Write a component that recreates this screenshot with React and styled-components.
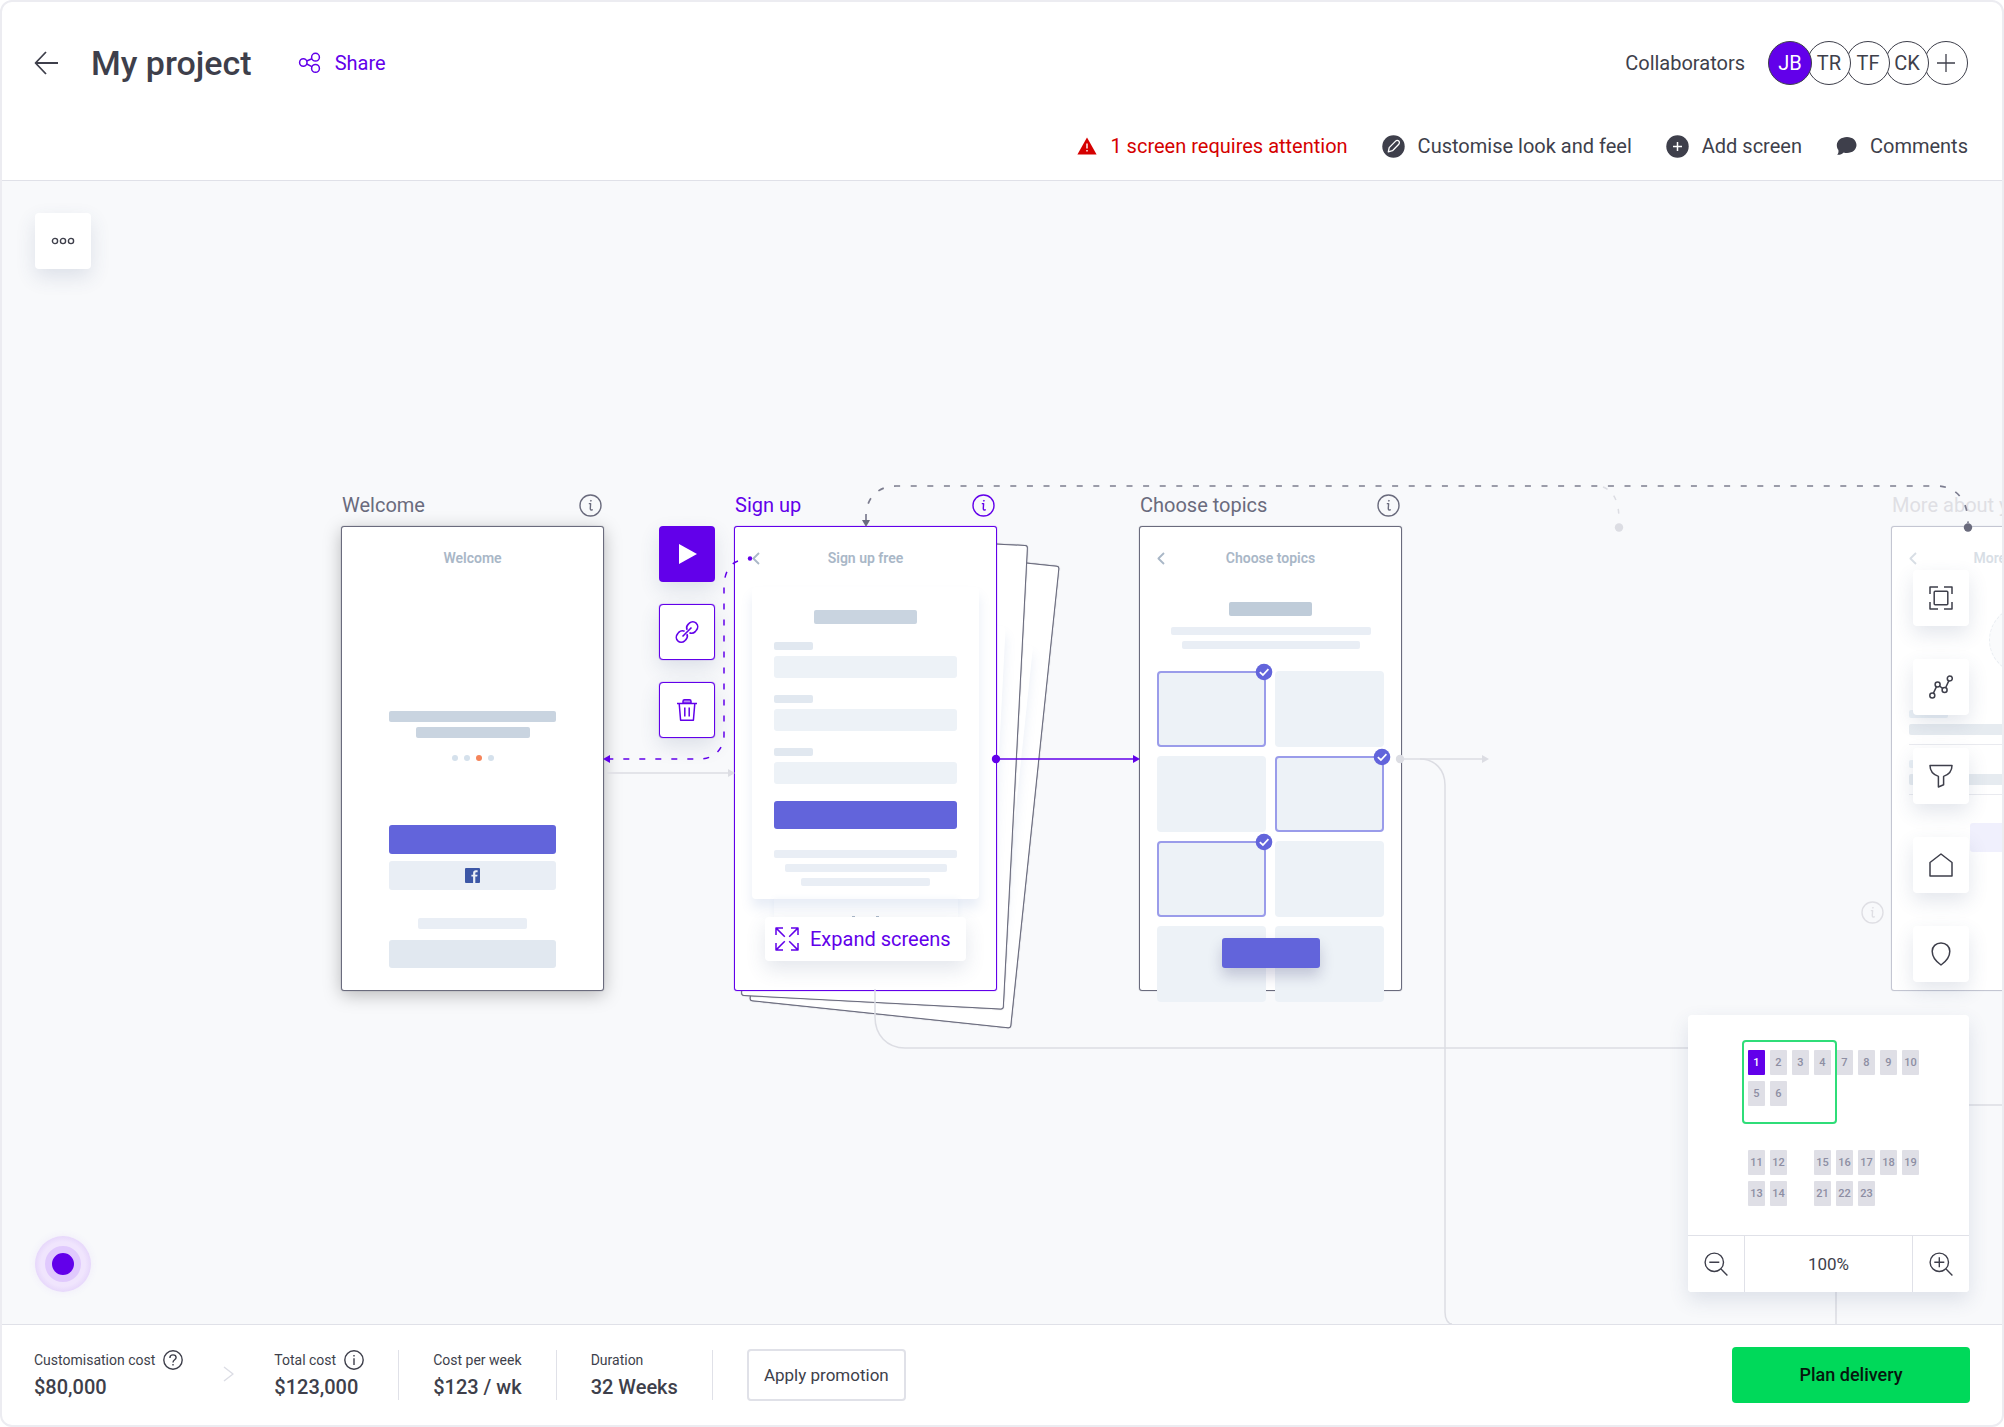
import React from "react";
import styled, { createGlobalStyle, css } from "styled-components";

const c = {
  ink: "#3e3f4b",
  muted: "#6a6b7d",
  purple: "#6200ea",
  indigo: "#6264db",
  red: "#d50000",
  green: "#00d95a",
  line: "#e0e1e8",
  edge: "#ececf1",
  canvas: "#f8f9fb",
  slate: "#a9b7c7",
};

const GlobalStyle = createGlobalStyle`
  * { box-sizing: border-box; }
  body { margin: 0; background: #fff; }
  button { font: inherit; color: inherit; cursor: pointer; }
  h1, h2, h3, p, dl, dt, dd { margin: 0; font-size: inherit; font-weight: inherit; }
  svg { display: block; flex: none; }
`;

const Shell = styled.div`
  display: flex;
  flex-direction: column;
  min-height: 100vh;
  border: 2px solid ${c.edge};
  border-radius: 12px;
  overflow: hidden;
  background: #fff;
  color: ${c.ink};
  font-family: Roboto, "Liberation Sans", sans-serif;
  font-size: 20px;
  line-height: 24px;
`;

/* ---------- header ---------- */

const Header = styled.header`
  display: flex;
  flex-direction: column;
  gap: 49px;
  padding: 39px 34px 22px 32px;
  border-bottom: 1px solid ${c.line};
`;

const HeaderRow = styled.div`
  display: flex;
  align-items: center;
  justify-content: ${(p) => (p.$end ? "flex-end" : "space-between")};
  gap: 34px;
`;

const Group = styled.div`
  display: flex;
  align-items: center;
`;

const PlainButton = styled.button`
  display: inline-flex;
  align-items: center;
  gap: 13px;
  padding: 0;
  border: 0;
  background: none;
  color: ${(p) => p.$color || c.ink};
`;

const Title = styled.h1`
  margin: 0 46px 0 33px;
  font-size: 34px;
  line-height: 40px;
  font-weight: 500;
`;

const Avatars = styled.ul`
  display: flex;
  margin: 0 0 0 23px;
  padding: 0;
  list-style: none;
  isolation: isolate;
`;

const AvatarItem = styled.li`
  position: relative;
  z-index: ${(p) => p.$z};
  & + & { margin-left: -5px; }
`;

const Avatar = styled.button`
  display: flex;
  align-items: center;
  justify-content: center;
  width: 44px;
  height: 44px;
  padding: 0;
  border: 1px solid ${c.ink};
  border-radius: 50%;
  background: ${(p) => (p.$active ? c.purple : "#fff")};
  color: ${(p) => (p.$active ? "#fff" : c.ink)};
`;

/* ---------- canvas ---------- */

const Canvas = styled.main`
  position: relative;
  flex: 1;
  min-height: 1142px;
  overflow: hidden;
  background: ${c.canvas};
`;

const Connectors = styled.svg`
  position: absolute;
  top: 1px;
  left: 0;
  width: 100%;
  height: 100%;
  pointer-events: none;
`;

const softShadow = css`
  box-shadow: 0 8px 20px rgba(60, 80, 120, 0.14);
`;

const Tile = styled.button`
  display: flex;
  align-items: center;
  justify-content: center;
  width: 56px;
  height: 56px;
  padding: 0;
  border: ${(p) => (p.$outlined ? `1px solid ${c.purple}` : "0")};
  border-radius: 4px;
  background: ${(p) => (p.$filled ? c.purple : "#fff")};
  color: ${(p) => (p.$filled ? "#fff" : p.$outlined ? c.purple : c.ink)};
  box-shadow: 0 8px 20px rgba(60, 80, 120, 0.14)${(p) => (p.$outlined ? `, 0 0 1px ${c.purple}` : "")};
`;

const Floating = styled.div`
  position: absolute;
  display: flex;
  flex-direction: column;
  gap: ${(p) => p.$gap || 0}px;
  left: ${(p) => (p.$left === undefined ? "auto" : `${p.$left}px`)};
  right: ${(p) => (p.$right === undefined ? "auto" : `${p.$right}px`)};
  top: ${(p) => (p.$top === undefined ? "auto" : `${p.$top}px`)};
  bottom: ${(p) => (p.$bottom === undefined ? "auto" : `${p.$bottom}px`)};
`;

const Node = styled.section`
  position: absolute;
  left: ${(p) => p.$left}px;
  top: 312px;
  width: 263px;
`;

const NodeLabel = styled.div`
  display: flex;
  align-items: center;
  justify-content: space-between;
  height: 24px;
  margin-bottom: 9px;
  padding: 0 ${(p) => p.$inset || 1}px 0 1px;
  white-space: nowrap;
  color: ${(p) => p.$color || c.muted};
`;

const InfoButton = styled.button`
  padding: 0;
  border: 0;
  background: none;
`;

const Screen = styled.div`
  position: relative;
  display: flex;
  flex-direction: column;
  align-items: center;
  height: 465px;
  padding-top: 23px;
  border: 1px solid ${(p) => p.$border || c.muted};
  border-radius: 3px;
  background: #fff;
  box-shadow: 0 0 1px ${(p) => p.$border || c.muted}${(p) => (p.$lifted ? ", 0 4px 18px rgba(0, 0, 0, 0.26)" : "")};
  & > * { flex: none; }
`;

const BackSheet = styled.div`
  position: absolute;
  left: ${(p) => p.$left}px;
  top: ${(p) => p.$top}px;
  display: flex;
  justify-content: center;
  width: 263px;
  height: 465px;
  padding-top: 60px;
  border: 1px solid ${c.muted};
  border-radius: 3px;
  background: #fff;
  box-shadow: 0 0 1px ${c.muted};
  transform: rotate(${(p) => p.$tilt}deg);
`;

const ScreenBar = styled.div`
  display: grid;
  grid-template-columns: 1fr auto 1fr;
  align-items: center;
  width: 100%;
  padding: 0 17px;
  font-size: 14px;
  line-height: 16px;
  font-weight: 600;
  white-space: nowrap;
  color: ${c.slate};
`;

const Bar = styled.div`
  flex: none;
  width: ${(p) => p.$w}px;
  height: ${(p) => p.$h}px;
  margin-top: ${(p) => p.$mt || 0}px;
  border-radius: ${(p) => (p.$h > 16 ? 3 : 2)}px;
  background: ${(p) => p.$bg || "#e9eef5"};
  display: flex;
  align-items: center;
  justify-content: center;
`;

const Dots = styled.div`
  display: flex;
  gap: 6px;
  margin-top: 17px;
`;

const Dot = styled.span`
  width: 6px;
  height: 6px;
  border-radius: 50%;
  background: ${(p) => (p.$on ? "#f5845a" : "#d5e1ec")};
`;

const FormPanel = styled.div`
  display: flex;
  flex-direction: column;
  align-items: ${(p) => (p.$blank ? "stretch" : "center")};
  width: 227px;
  height: 312px;
  margin-top: 21px;
  padding-top: 23px;
  border-radius: 4px;
  background: #fff;
  box-shadow: 0 9px 12px rgba(90, 130, 190, 0.14);
`;

const Fields = styled.div`
  display: flex;
  flex-direction: column;
  gap: 17px;
  margin-top: 18px;
`;

const Peek = styled.div`
  display: flex;
  align-items: flex-end;
  justify-content: center;
  gap: 21px;
  width: 184px;
  height: 18px;
  box-shadow: 0 0 6px rgba(90, 130, 190, 0.08);
`;

const Tick = styled.span`
  width: 3px;
  height: 1px;
  background: ${c.slate};
`;

const ExpandButton = styled.button`
  position: relative;
  display: flex;
  align-items: center;
  gap: 11px;
  height: 44px;
  width: 201px;
  padding: 0 0 0 10px;
  border: 0;
  border-radius: 4px;
  background: #fff;
  color: ${c.purple};
  white-space: nowrap;
  ${softShadow}
`;

const Topics = styled.div`
  display: grid;
  grid-template-columns: repeat(2, 109px);
  grid-auto-rows: 76px;
  gap: 9px;
  margin-top: 22px;
`;

const Topic = styled.div`
  position: relative;
  border: ${(p) => (p.$on ? "2px solid #9a9cea" : "0")};
  border-radius: 4px;
  background: #edf2f7;
`;

const Check = styled.span`
  position: absolute;
  top: -10px;
  right: -9px;
`;

const Cta = styled.div`
  position: absolute;
  bottom: 22px;
  left: 50%;
  width: 98px;
  height: 30px;
  margin-left: -49px;
  border-radius: 3px;
  background: ${c.indigo};
  box-shadow: 0 8px 14px rgba(40, 40, 100, 0.22);
`;

const Faded = styled.div`
  display: flex;
  flex-direction: column;
  align-items: center;
  width: 100%;
  opacity: 0.45;
`;

const Portrait = styled.div`
  width: 68px;
  height: 68px;
  margin-top: 40px;
  border: 1px dashed #cfd8e2;
  border-radius: 50%;
  background: #f4f7fa;
`;

const FieldStack = styled.div`
  display: flex;
  flex-direction: column;
  width: 227px;
  margin-top: ${(p) => p.$mt}px;
  padding-bottom: 9px;
  border-bottom: 1px solid #cfd2dc;
`;

const Pulse = styled.button`
  display: flex;
  align-items: center;
  justify-content: center;
  width: 56px;
  height: 56px;
  padding: 0;
  border: 0;
  border-radius: 50%;
  background: radial-gradient(circle, #f0e5fd 56%, #e7d8fb 70%);
  box-shadow: 0 0 10px rgba(98, 0, 234, 0.06);
`;

const PulseCore = styled.span`
  width: 36px;
  height: 36px;
  border: 7px solid #e0c9fd;
  border-radius: 50%;
  background: ${c.purple};
`;

/* ---------- minimap ---------- */

const MiniMap = styled.aside`
  width: 281px;
  border-radius: 4px;
  background: #fff;
  overflow: hidden;
`;

const MiniFrame = styled.div`
  border-radius: 4px;
  ${softShadow}
`;

const MiniBody = styled.div`
  position: relative;
  display: flex;
  flex-direction: column;
  gap: 44px;
  height: 220px;
  padding: 35px 0 0 60px;
`;

const MiniGrid = styled.div`
  display: grid;
  grid-template-columns: repeat(8, 17px);
  grid-auto-rows: 25px;
  gap: 6px 5px;
`;

const MiniCell = styled.button`
  grid-column: ${(p) => p.$col};
  grid-row: ${(p) => p.$row};
  padding: 0;
  border: 0;
  border-radius: 1px;
  background: ${(p) => (p.$on ? c.purple : "#dfdfe6")};
  color: ${(p) => (p.$on ? "#fff" : "#8d8ea3")};
  font-size: 11px;
  line-height: 25px;
  font-weight: 500;
  text-align: center;
`;

const Viewport = styled.div`
  position: absolute;
  left: 54px;
  top: 25px;
  width: 95px;
  height: 84px;
  border: 2px solid #2fdd78;
  border-radius: 4px;
`;

const ZoomBar = styled.div`
  display: grid;
  grid-template-columns: 56px 1fr 56px;
  height: 57px;
  border-top: 1px solid ${c.line};
`;

const ZoomButton = styled.button`
  display: flex;
  align-items: center;
  justify-content: center;
  padding: 0;
  border: 0;
  background: #fff;
`;

const ZoomValue = styled.output`
  display: flex;
  align-items: center;
  justify-content: center;
  border: solid ${c.line};
  border-width: 0 1px;
  font-size: 17px;
`;

/* ---------- footer ---------- */

const Footer = styled.footer`
  display: flex;
  align-items: center;
  height: 101px;
  padding: 0 32px;
  border-top: 1px solid ${c.line};
`;

const Stats = styled.dl`
  display: flex;
  align-items: center;
`;

const Stat = styled.div`
  display: flex;
  flex-direction: column;
  gap: 5px;
  height: 50px;
  padding-right: ${(p) => (p.$divided ? 34 : 40)}px;
  margin-right: ${(p) => (p.$divided ? 34 : 0)}px;
  border-right: ${(p) => (p.$divided ? `1px solid ${c.line}` : "0")};
`;

const StatName = styled.dt`
  display: flex;
  align-items: center;
  gap: 8px;
  height: 20px;
  font-size: 14px;
  white-space: nowrap;
`;

const StatValue = styled.dd`
  font-size: 20px;
  font-weight: 500;
  white-space: nowrap;
`;

const StepMark = styled.div`
  margin-right: 40px;
`;

const Promo = styled.button`
  height: 52px;
  width: 159px;
  padding: 0;
  border: 2px solid ${c.line};
  border-radius: 4px;
  background: #fff;
  font-size: 17px;
`;

const Plan = styled.button`
  width: 238px;
  height: 56px;
  margin-left: auto;
  padding: 0;
  border: 0;
  border-radius: 4px;
  background: ${c.green};
  color: #06170d;
  font-size: 18px;
  font-weight: 500;
`;

/* ---------- icons ---------- */

const Line = ({ size = 24, w = size, h = size, sw = 1.3, children }) => (
  <svg
    width={w}
    height={h}
    viewBox={`0 0 ${w} ${h}`}
    fill="none"
    stroke="currentColor"
    strokeWidth={sw}
    strokeLinejoin="round"
    aria-hidden="true"
  >
    {children}
  </svg>
);

const ArrowLeft = () => (
  <Line sw={1.8}>
    <path d="M24 12H1.5M12 1L1.5 12L12 23" />
  </Line>
);

const ShareIcon = () => (
  <Line sw={1.5}>
    <circle cx="5.3" cy="11.5" r="3.7" />
    <circle cx="17.5" cy="6.2" r="3.9" />
    <circle cx="17.5" cy="17.4" r="3.9" />
    <path d="M8.7 10L13.9 7.7M8.7 13L13.9 15.7" />
  </Line>
);

const PlusIcon = () => (
  <Line size={20} sw={1.3}>
    <path d="M10 1V19M1 10H19" />
  </Line>
);

const AlertIcon = () => (
  <svg width="20" height="18" viewBox="0 0 20 18" aria-hidden="true">
    <path d="M10 0.5L19.6 17.5H0.4Z" fill="currentColor" />
    <path d="M10 6.5V11.5M10 13V14.4" stroke="#fff" strokeWidth="1.4" />
  </svg>
);

const PencilDisc = () => (
  <svg width="23" height="23" viewBox="0 0 23 23" aria-hidden="true">
    <circle cx="11.5" cy="11.5" r="11.2" fill="currentColor" />
    <path
      d="M6.3 16.8L7.2 12.6L13.6 6.1A2.1 2.1 0 0 1 16.8 9.2L10.5 15.7Z"
      fill="none"
      stroke="#fff"
      strokeWidth="1.3"
      strokeLinejoin="round"
    />
  </svg>
);

const PlusDisc = () => (
  <svg width="23" height="23" viewBox="0 0 23 23" aria-hidden="true">
    <circle cx="11.5" cy="11.5" r="11.2" fill="currentColor" />
    <path d="M11.5 7V16M7 11.5H16" stroke="#fff" strokeWidth="1.5" />
  </svg>
);

const BubbleIcon = () => (
  <svg width="21" height="20" viewBox="0 0 21 20" aria-hidden="true">
    <path
      d="M11 1C16.6 1 20.5 4.6 20.5 9C20.5 13.4 16.6 17 11 17C9.8 17 8.7 16.9 7.7 16.5C6 18.2 4 19 1.2 18.8C2.4 17.6 2.7 16 2.4 14C1.3 12.6 0.8 10.9 0.8 9C0.8 4.6 5.4 1 11 1Z"
      fill="currentColor"
    />
  </svg>
);

const MoreIcon = () => (
  <Line w={24} h={8} sw={1.4}>
    <circle cx="4" cy="4" r="2.6" />
    <circle cx="12" cy="4" r="2.6" />
    <circle cx="20" cy="4" r="2.6" />
  </Line>
);

const ItalicInfo = () => (
  <Line size={23} sw={1.4}>
    <circle cx="11.5" cy="11.5" r="10.5" />
    <path d="M9.8 9.6H11.6L11.3 14.2C11.2 15.8 12 16.4 13.8 15.7" />
    <circle cx="11.9" cy="6.8" r="0.5" fill="currentColor" strokeWidth="0.8" />
  </Line>
);

const PlayIcon = () => (
  <svg width="20" height="22" viewBox="0 0 20 22" aria-hidden="true">
    <path d="M2 1L20 11L2 21Z" fill="currentColor" />
  </svg>
);

const LinkIcon = () => (
  <Line sw={1.6}>
    <path d="M9.6 11.2C7.6 10.4 5.3 10.8 3.7 12.4L2.6 13.9C0.8 15.9 0.9 18.9 2.8 20.8C4.7 22.6 7.7 22.6 9.7 20.8L10.9 19.6C12.5 18 12.7 15.9 11.9 14.2" />
    <path d="M14.4 12.8C16.4 13.6 18.7 13.2 20.3 11.6L21.4 10.1C23.2 8.1 23.1 5.1 21.2 3.2C19.3 1.4 16.3 1.4 14.3 3.2L13.1 4.4C11.5 6 11.3 8.1 12.1 9.8" />
    <path d="M7.5 16.5L16.5 7.5" />
  </Line>
);

const TrashIcon = () => (
  <Line sw={1.5}>
    <path d="M8 5.2V3.2C8 2.3 8.6 1.7 9.5 1.7H14.5C15.4 1.7 16 2.3 16 3.2V5.2Z" fill="#b48af4" />
    <path d="M2 5.5H22M4.2 5.5L5.6 22.3H18.4L19.8 5.5M9.8 9.5V18.5M14.2 9.5V18.5" />
  </Line>
);

const ExpandIcon = () => (
  <Line sw={1.5}>
    <path d="M1 8V1H8M1.4 1.4L9.8 9.8M16 1H23V8M22.6 1.4L14.2 9.8M1 16V23H8M1.4 22.6L9.8 14.2M23 16V23H16M22.6 22.6L14.2 14.2" />
  </Line>
);

const Chevron = () => (
  <Line w={8} h={13} sw={1.8}>
    <path d="M7 1L1.4 6.5L7 12" />
  </Line>
);

const FacebookIcon = () => (
  <svg width="15" height="15" viewBox="0 0 15 15" aria-hidden="true">
    <rect width="15" height="15" rx="1" fill="#3c57a6" />
    <path
      d="M12.6 4.2H11.4C10.6 4.2 10.3 4.6 10.3 5.4V6.7H12.6L12.2 8.6H10.3V15H8.1V8.6H6.4V6.7H8.1V5C8.1 3.2 9.2 2.3 10.9 2.3H12.6Z"
      fill="#e9eef5"
    />
  </svg>
);

const CheckBadge = () => (
  <svg width="18" height="18" viewBox="0 0 18 18" aria-hidden="true">
    <circle cx="9" cy="9" r="8.3" fill={c.indigo} />
    <path d="M4.8 9.2L7.9 12L13.4 6.2" fill="none" stroke="#fff" strokeWidth="1.7" />
  </svg>
);

const FrameIcon = () => (
  <Line sw={1.5}>
    <path d="M1 8V1H9M15 1H23V8M23 16V23H15M9 23H1V16" />
    <rect x="5.2" y="5.2" width="13.6" height="13.6" rx="1" />
  </Line>
);

const GraphIcon = () => (
  <Line sw={1.5}>
    <circle cx="3.3" cy="20.4" r="2.5" />
    <circle cx="8.6" cy="9.4" r="2.5" />
    <circle cx="15.6" cy="15" r="2.5" />
    <circle cx="20.8" cy="3.6" r="2.5" />
    <path d="M4.4 18.1L7.5 11.7M10.5 11L13.6 13.4M16.6 12.7L19.8 5.9" />
  </Line>
);

const FunnelIcon = () => (
  <Line sw={1.5}>
    <path d="M1 1.5H23C23 7 20 10.5 14.6 12.4V20.8L9.4 23V12.4C4 10.5 1 7 1 1.5Z" />
  </Line>
);

const HomeIcon = () => (
  <Line sw={1.5}>
    <path d="M1 9.5L12 1L23 9.5V23H1Z" />
  </Line>
);

const PinIcon = () => (
  <Line sw={1.5}>
    <path d="M12 1C17.2 1 20.8 4.6 20.8 9.3C20.8 14.5 17.5 19.2 12 23C6.5 19.2 3.2 14.5 3.2 9.3C3.2 4.6 6.8 1 12 1Z" />
  </Line>
);

const Magnifier = ({ plus }) => (
  <Line sw={1.4}>
    <circle cx="10.3" cy="10.3" r="9.2" />
    <path d={`M17 17L23.4 23.4M5.3 10.3H15.3${plus ? "M10.3 5.3V15.3" : ""}`} />
  </Line>
);

const HelpIcon = () => (
  <Line size={20} sw={1.4}>
    <circle cx="10" cy="10" r="9.2" />
    <path d="M6.9 7.9C6.9 5.9 8.2 4.9 10 4.9S13.1 6 13.1 7.6C13.1 9.8 10 9.8 10 12.4M10 14V15.4" />
  </Line>
);

const InfoIcon = () => (
  <Line size={20} sw={1.4}>
    <circle cx="10" cy="10" r="9.2" />
    <path d="M10 8.2V15M10 5V6.4" />
  </Line>
);

const NextIcon = () => (
  <Line w={11} h={16} sw={1.4}>
    <path d="M1 1L10 8L1 15" />
  </Line>
);

/* ---------- data ---------- */

const collaborators = ["JB", "TR", "TF", "CK"];

const miniTop = [
  [1, 1, 1], [2, 2, 1], [3, 3, 1], [4, 4, 1], [7, 5, 1], [8, 6, 1], [9, 7, 1], [10, 8, 1],
  [5, 1, 2], [6, 2, 2],
];

const miniBottom = [
  [11, 1, 1], [12, 2, 1], [15, 4, 1], [16, 5, 1], [17, 6, 1], [18, 7, 1], [19, 8, 1],
  [13, 1, 2], [14, 2, 2], [21, 4, 2], [22, 5, 2], [23, 6, 2],
];

const tools = [
  ["Fit to screen", FrameIcon],
  ["Flow", GraphIcon],
  ["Filter", FunnelIcon],
  ["Home", HomeIcon],
  ["Pin", PinIcon],
];

const topicsOn = [true, false, false, true, true, false, false, false];

/* ---------- parts ---------- */

const ScreenTitle = ({ children, back }) => (
  <ScreenBar>
    {back ? <Chevron /> : <span />}
    <h3>{children}</h3>
    <span />
  </ScreenBar>
);

const NodeHead = ({ name, ...rest }) => (
  <NodeLabel {...rest}>
    <h2>{name}</h2>
    <InfoButton aria-label={`About ${name}`}>
      <ItalicInfo />
    </InfoButton>
  </NodeLabel>
);

const ConnectorLines = () => (
  <Connectors fill="none" strokeWidth="1.5" aria-hidden="true">
    <g stroke="#dcdde3">
      <path d="M605 591H728" />
      <path d="M1402 577H1482" />
      <path d="M1418 577C1433 577 1443 588 1443 603V1130C1443 1137 1446 1142 1450 1142" />
      <path d="M873 807V835C873 853 885 866 903 866H1700" />
      <path d="M1960 923H2000M1834 1100V1142" />
      <path d="M1601 305C1612 309 1617 320 1617 338" strokeDasharray="5 9" />
    </g>
    <g fill="#dcdde3">
      <path d="M726 587L733 591L726 595Z" />
      <path d="M1480 573L1487 577L1480 581Z" />
      <circle cx="1398" cy="577" r="4.2" />
      <circle cx="1617" cy="345.5" r="4.2" />
    </g>
    <path
      d="M864 338V334C864 316 876 304 894 304H1934C1954 304 1966 318 1966 341"
      stroke="#7c7d8f"
      strokeWidth="1.7"
      strokeDasharray="6 10.6"
    />
    <g fill={c.muted}>
      <path d="M860 338H868L864 345Z" />
      <circle cx="1966" cy="345.5" r="4.2" />
    </g>
    <g stroke={c.purple}>
      <path d="M994 577H1133" />
      <path
        d="M736 379C727 382 722 392 722 405V553C722 567 712 577 698 577H607"
        strokeDasharray="6 10"
      />
    </g>
    <g fill={c.purple}>
      <circle cx="748" cy="376.5" r="2.2" />
      <circle cx="994" cy="577" r="4.2" />
      <path d="M1131 573L1138 577L1131 581Z" />
      <path d="M608 573L601 577L608 581Z" />
    </g>
  </Connectors>
);

const MiniCells = ({ cells }) => (
  <MiniGrid>
    {cells.map(([n, col, row]) => (
      <MiniCell key={n} $col={col} $row={row} $on={n === 1}>
        {n}
      </MiniCell>
    ))}
  </MiniGrid>
);

/* ---------- page ---------- */

export default function App() {
  return (
    <>
      <GlobalStyle />
      <Shell>
        <Header>
          <HeaderRow>
            <Group>
              <PlainButton aria-label="Back">
                <ArrowLeft />
              </PlainButton>
              <Title>My project</Title>
              <PlainButton $color={c.purple}>
                <ShareIcon />
                Share
              </PlainButton>
            </Group>
            <Group>
              Collaborators
              <Avatars>
                {collaborators.map((name, i) => (
                  <AvatarItem key={name} $z={9 - i}>
                    <Avatar $active={i === 0}>{name}</Avatar>
                  </AvatarItem>
                ))}
                <AvatarItem $z={1}>
                  <Avatar aria-label="Add collaborator">
                    <PlusIcon />
                  </Avatar>
                </AvatarItem>
              </Avatars>
            </Group>
          </HeaderRow>
          <HeaderRow $end>
            <PlainButton $color={c.red}>
              <AlertIcon />1 screen requires attention
            </PlainButton>
            <PlainButton>
              <PencilDisc />
              Customise look and feel
            </PlainButton>
            <PlainButton>
              <PlusDisc />
              Add screen
            </PlainButton>
            <PlainButton>
              <BubbleIcon />
              Comments
            </PlainButton>
          </HeaderRow>
        </Header>

        <Canvas>
          <Node $left={339}>
            <NodeHead name="Welcome" $inset={2} />
            <Screen $lifted>
              <ScreenTitle>Welcome</ScreenTitle>
              <Bar $w={167} $h={11} $mt={145} $bg="#c9d4e0" />
              <Bar $w={114} $h={11} $mt={5} $bg="#c9d4e0" />
              <Dots>
                <Dot />
                <Dot />
                <Dot $on />
                <Dot />
              </Dots>
              <Bar $w={167} $h={29} $mt={64} $bg={c.indigo} />
              <Bar $w={167} $h={29} $mt={7}>
                <FacebookIcon />
              </Bar>
              <Bar $w={109} $h={11} $mt={28} />
              <Bar $w={167} $h={28} $mt={11} $bg="#e1e8f0" />
            </Screen>
          </Node>

          <Floating $left={657} $top={345} $gap={22}>
            <Tile $filled aria-label="Play">
              <PlayIcon />
            </Tile>
            <Tile $outlined aria-label="Link">
              <LinkIcon />
            </Tile>
            <Tile $outlined aria-label="Delete">
              <TrashIcon />
            </Tile>
          </Floating>

          <BackSheet $left={771} $top={370} $tilt={6}>
            <FormPanel $blank />
          </BackSheet>
          <BackSheet $left={751} $top={357} $tilt={3}>
            <FormPanel $blank />
          </BackSheet>
          <Node $left={732}>
            <NodeHead name="Sign up" $color={c.purple} $inset={2} />
            <Screen $border={c.purple}>
              <ScreenTitle back>Sign up free</ScreenTitle>
              <FormPanel>
                <Bar $w={103} $h={14} $bg="#c9d4e0" />
                <Fields>
                  {[0, 1, 2].map((i) => (
                    <div key={i}>
                      <Bar $w={39} $h={8} $bg="#e1e8f0" />
                      <Bar $w={183} $h={22} $mt={6} $bg="#edf2f7" />
                    </div>
                  ))}
                </Fields>
                <Bar $w={183} $h={28} $mt={17} $bg={c.indigo} />
                <Bar $w={183} $h={8} $mt={21} />
                <Bar $w={162} $h={8} $mt={6} />
                <Bar $w={129} $h={8} $mt={6} />
              </FormPanel>
              <Peek>
                <Tick />
                <Tick />
              </Peek>
              <ExpandButton>
                <ExpandIcon />
                Expand screens
              </ExpandButton>
            </Screen>
          </Node>

          <Node $left={1137}>
            <NodeHead name="Choose topics" $inset={2} />
            <Screen>
              <ScreenTitle back>Choose topics</ScreenTitle>
              <Bar $w={83} $h={14} $mt={36} $bg="#bfccd9" />
              <Bar $w={200} $h={8} $mt={11} />
              <Bar $w={178} $h={8} $mt={6} />
              <Topics>
                {topicsOn.map((on, i) => (
                  <Topic key={i} $on={on}>
                    {on && (
                      <Check>
                        <CheckBadge />
                      </Check>
                    )}
                  </Topic>
                ))}
              </Topics>
              <Cta />
            </Screen>
          </Node>

          <Node $left={1889}>
            <NodeHead name="More about you" $color="#dfdfe4" />
            <Screen $border="#c4c6d2">
              <Faded>
                <ScreenTitle back>More about you</ScreenTitle>
                <Portrait />
                <FieldStack $mt={36}>
                  <Bar $w={39} $h={8} $bg="#d5e1ec" />
                  <Bar $w={227} $h={11} $mt={6} $bg="#c9d4e0" />
                </FieldStack>
                <FieldStack $mt={15}>
                  <Bar $w={39} $h={8} $bg="#d5e1ec" />
                  <Bar $w={227} $h={11} $mt={6} $bg="#c9d4e0" />
                </FieldStack>
                <Bar $w={106} $h={29} $mt={28} $bg="#e0e0fb" />
              </Faded>
            </Screen>
          </Node>

          <Floating $left={1858} $top={719}>
            <NodeLabel as="div" $color="#dfdfe4">
              <InfoButton aria-label="About this link">
                <ItalicInfo />
              </InfoButton>
            </NodeLabel>
          </Floating>

          <ConnectorLines />

          <Floating $left={33} $top={32}>
            <Tile aria-label="More options">
              <MoreIcon />
            </Tile>
          </Floating>

          <Floating $right={33} $top={389} $gap={33}>
            {tools.map(([name, Icon]) => (
              <Tile key={name} aria-label={name}>
                <Icon />
              </Tile>
            ))}
          </Floating>

          <Floating $left={33} $bottom={32}>
            <Pulse aria-label="Record">
              <PulseCore />
            </Pulse>
          </Floating>

          <Floating $right={33} $bottom={32}>
            <MiniFrame>
              <MiniMap>
                <MiniBody>
                  <MiniCells cells={miniTop} />
                  <MiniCells cells={miniBottom} />
                  <Viewport />
                </MiniBody>
                <ZoomBar>
                  <ZoomButton aria-label="Zoom out">
                    <Magnifier />
                  </ZoomButton>
                  <ZoomValue>100%</ZoomValue>
                  <ZoomButton aria-label="Zoom in">
                    <Magnifier plus />
                  </ZoomButton>
                </ZoomBar>
              </MiniMap>
            </MiniFrame>
          </Floating>
        </Canvas>

        <Footer>
          <Stats>
            <Stat>
              <StatName>
                Customisation cost
                <HelpIcon />
              </StatName>
              <StatValue>$80,000</StatValue>
            </Stat>
            <StepMark as="dd">
              <PlainButton as="span" $color="#dcdde5">
                <NextIcon />
              </PlainButton>
            </StepMark>
            <Stat $divided>
              <StatName>
                Total cost
                <InfoIcon />
              </StatName>
              <StatValue>$123,000</StatValue>
            </Stat>
            <Stat $divided>
              <StatName>Cost per week</StatName>
              <StatValue>$123 / wk</StatValue>
            </Stat>
            <Stat $divided>
              <StatName>Duration</StatName>
              <StatValue>32 Weeks</StatValue>
            </Stat>
          </Stats>
          <Promo>Apply promotion</Promo>
          <Plan>Plan delivery</Plan>
        </Footer>
      </Shell>
    </>
  );
}
